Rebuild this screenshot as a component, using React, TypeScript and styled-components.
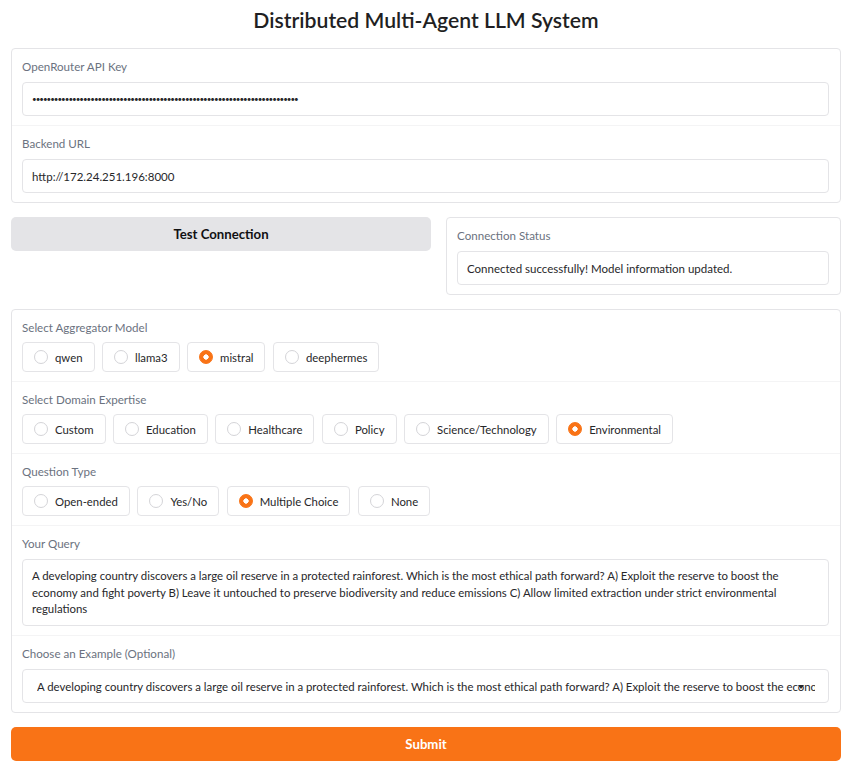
import React from "react";
import styled, { createGlobalStyle } from "styled-components";

const GlobalStyle = createGlobalStyle`
  html, body { margin: 0; padding: 0; background: #ffffff; }
  body { font-family: Lato, "Noto Sans", sans-serif; color: #27272a; }
  * { box-sizing: border-box; }
`;

const Page = styled.div`
  display: flex;
  flex-direction: column;
  gap: 14px;
  padding: 0 12px 10px 11px;
`;

const Title = styled.h1`
  margin: 0 0 -1px;
  padding-top: 5px;
  font-size: 21.2px;
  line-height: 30px;
  font-weight: 600;
  text-align: center;
  color: #1f1f23;
`;

const Panel = styled.div`
  border: 1px solid #e4e4e7;
  border-radius: 4px;
  background: #ffffff;
  display: flex;
  flex-direction: column;
`;

const Field = styled.div`
  padding: 10px 11px 9px 10px;
  & + & { border-top: 1px solid #f4f4f5; }
`;

const Label = styled.div<{ $gap?: number }>`
  font-size: 11.6px;
  line-height: 15px;
  color: #6b7280;
  margin-bottom: ${(p) => p.$gap ?? 8}px;
`;

const Input = styled.div`
  height: 34px;
  border: 1px solid #e4e4e7;
  border-radius: 4px;
  padding: 0 9px;
  display: flex;
  align-items: center;
  font-size: 11.5px;
  color: #27272a;
  white-space: nowrap;
  overflow: hidden;
`;

const Dots = styled.span`
  letter-spacing: -1px;
  font-size: 8px;
  color: #27272a;
`;

const Row = styled.div`
  display: grid;
  grid-template-columns: 420fr 395fr;
  gap: 15px;
  align-items: start;
`;

const Button = styled.button<{ $primary?: boolean }>`
  height: 34px;
  border: none;
  border-radius: 5px;
  font-family: inherit;
  font-size: 13.2px;
  font-weight: 700;
  background: ${(p) => (p.$primary ? "#f97316" : "#e4e4e7")};
  color: ${(p) => (p.$primary ? "#ffffff" : "#111113")};
  width: 100%;
  cursor: pointer;
`;

const RadioGroup = styled.div`
  display: flex;
  flex-wrap: wrap;
  gap: 7.5px;
`;

const RadioItem = styled.label`
  height: 30px;
  display: flex;
  align-items: center;
  gap: 7px;
  padding: 0 11px;
  border: 1px solid #e4e4e7;
  border-radius: 4px;
  font-size: 11.35px;
  color: #27272a;
  background: #ffffff;
`;

const Circle = styled.span<{ $checked?: boolean }>`
  width: 14px;
  height: 14px;
  border-radius: 50%;
  border: 1px solid ${(p) => (p.$checked ? "#f97316" : "#d4d4d8")};
  background: ${(p) =>
    p.$checked
      ? "radial-gradient(circle, #ffffff 0 2.4px, #f97316 2.9px)"
      : "#ffffff"};
  flex-shrink: 0;
`;

const TextArea = styled.div`
  height: 67px;
  border: 1px solid #e4e4e7;
  border-radius: 4px;
  padding: 8px 9px;
  font-size: 11.4px;
  line-height: 16.7px;
  color: #27272a;
  overflow: hidden;
`;

const Select = styled.div`
  position: relative;
  height: 34px;
  border: 1px solid #e4e4e7;
  border-radius: 4px;
  padding: 0 13px 0 14px;
  display: flex;
  align-items: center;
  font-size: 11.4px;
  color: #27272a;
`;

const SelectText = styled.span`
  white-space: nowrap;
  overflow: hidden;
  flex: 1;
`;

const Arrow = styled.span`
  position: absolute;
  right: 24px;
  top: 15px;
  width: 0;
  height: 0;
  border-left: 3px solid transparent;
  border-right: 3px solid transparent;
  border-top: 4px solid #27272a;
`;

const Radios = ({ options, value }: { options: string[]; value: string }) => (
  <RadioGroup>
    {options.map((o) => (
      <RadioItem key={o}>
        <Circle $checked={o === value} />
        {o}
      </RadioItem>
    ))}
  </RadioGroup>
);

const query =
  "A developing country discovers a large oil reserve in a protected rainforest. Which is the most ethical path forward? A) Exploit the reserve to boost the economy and fight poverty B) Leave it untouched to preserve biodiversity and reduce emissions C) Allow limited extraction under strict environmental regulations";

export default function App() {
  return (
    <>
      <GlobalStyle />
      <Page>
        <Title>Distributed Multi-Agent LLM System</Title>
        <Panel>
          <Field>
            <Label>OpenRouter API Key</Label>
            <Input>
              <Dots>{"•".repeat(73)}</Dots>
            </Input>
          </Field>
          <Field>
            <Label>Backend URL</Label>
            <Input>http://172.24.251.196:8000</Input>
          </Field>
        </Panel>
        <Row>
          <Button>Test Connection</Button>
          <Panel>
            <Field>
              <Label>Connection Status</Label>
              <Input>Connected successfully! Model information updated.</Input>
            </Field>
          </Panel>
        </Row>
        <Panel>
          <Field>
            <Label $gap={7}>Select Aggregator Model</Label>
            <Radios options={["qwen", "llama3", "mistral", "deephermes"]} value="mistral" />
          </Field>
          <Field>
            <Label $gap={7}>Select Domain Expertise</Label>
            <Radios
              options={["Custom", "Education", "Healthcare", "Policy", "Science/Technology", "Environmental"]}
              value="Environmental"
            />
          </Field>
          <Field>
            <Label $gap={7}>Question Type</Label>
            <Radios options={["Open-ended", "Yes/No", "Multiple Choice", "None"]} value="Multiple Choice" />
          </Field>
          <Field>
            <Label>Your Query</Label>
            <TextArea>{query}</TextArea>
          </Field>
          <Field>
            <Label>Choose an Example (Optional)</Label>
            <Select>
              <SelectText>{query}</SelectText>
              <Arrow />
            </Select>
          </Field>
        </Panel>
        <Button $primary>Submit</Button>
      </Page>
    </>
  );
}
